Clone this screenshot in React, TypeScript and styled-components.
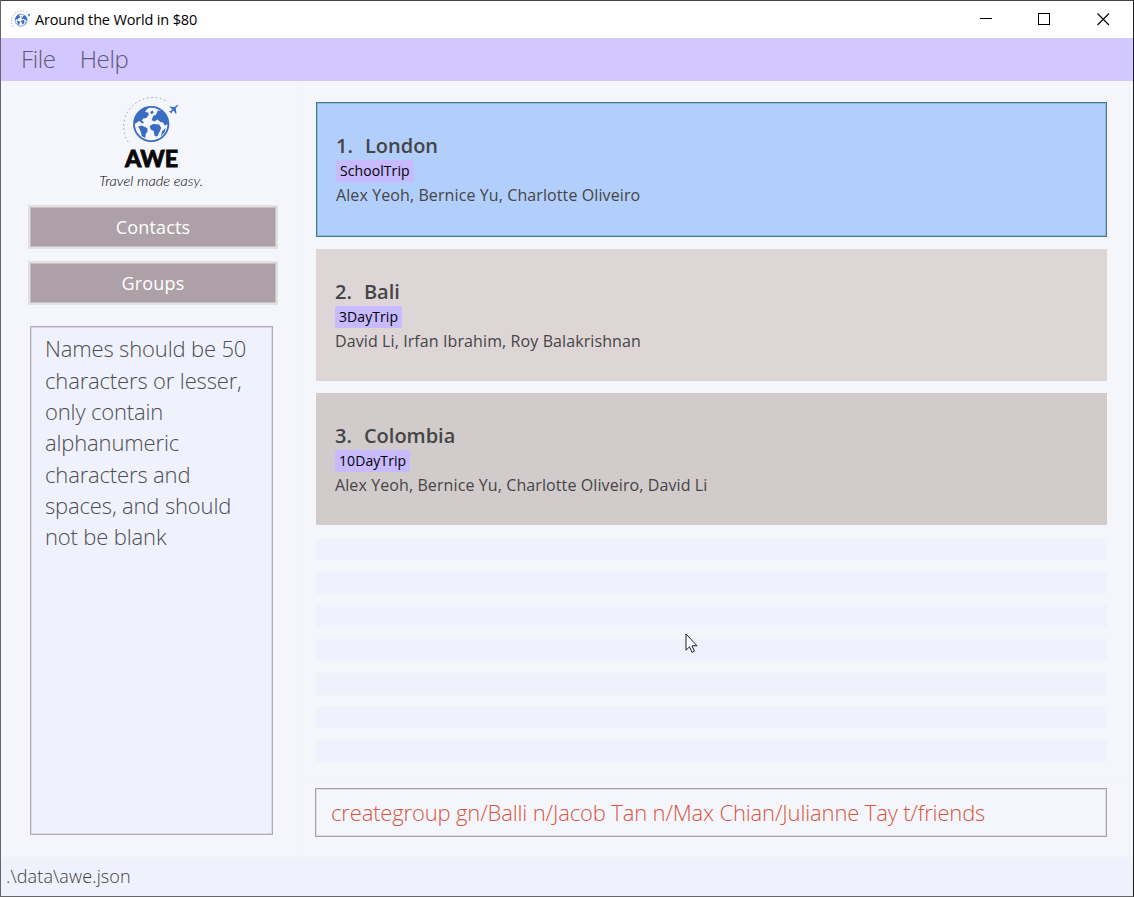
import React from "react";
import styled, { createGlobalStyle } from "styled-components";

const Global = createGlobalStyle`
  * { box-sizing: border-box; }
  body { margin: 0; font-family: "Open Sans", sans-serif; }
`;

const Window = styled.div`
  width: 1134px;
  height: 897px;
  display: flex;
  flex-direction: column;
  border: 1px solid #666;
  border-top-color: #444;
  border-right-color: #1c1c1c;
  background: #f4f6fc;
  position: relative;
  overflow: hidden;
`;
const TitleBar = styled.header`
  height: 37px;
  flex: none;
  display: flex;
  align-items: center;
  padding-left: 10px;
  background: #fff;
`;
const Title = styled.span`
  margin-left: 4px;
  flex: 1;
  font-size: 14.5px;
  letter-spacing: -0.16px;
  color: #000;
`;
const Controls = styled.div`
  display: flex;
  gap: 46px;
  margin-right: 23px;
`;
const MenuBar = styled.nav`
  height: 43px;
  flex: none;
  display: flex;
  align-items: center;
  gap: 24px;
  padding-left: 20px;
  background: #d2c7ff;
  font-size: 24px;
  letter-spacing: -0.35px;
  font-weight: 300;
  color: #5c5770;
`;
const MenuItem = styled.span`
  line-height: 41px;
  padding-bottom: 2px;
`;
const Body = styled.main`
  height: 776px;
  flex: none;
  display: flex;
`;
const Sidebar = styled.aside`
  width: 301px;
  border-right: 2px solid #f2f4fa;
  flex: none;
  display: flex;
  flex-direction: column;
  padding-left: 27px;
`;
const LogoBox = styled.div`
  height: 124px;
  flex: none;
`;
const SideButton = styled.button`
  width: 250px;
  height: 44px;
  flex: none;
  margin-bottom: 12px;
  padding: 0;
  border: 2px solid #e1e1e3;
  background: #ada0a6;
  box-shadow: inset 0 0 0 1px #c6bec1;
  font-family: inherit;
  font-size: 18px;
  letter-spacing: 0.18px;
  line-height: 38px;
  color: #fff;
`;
const Message = styled.section`
  width: 243px;
  height: 509px;
  flex: none;
  margin: 9px 0 0 2px;
  padding: 6.4px 13px 0 14px;
  border: 1px solid #b5aab0;
  box-shadow: inset 0 0 0 1px #dcd9e2;
  background: #eff2fc;
  font-size: 22px;
  letter-spacing: -0.15px;
  line-height: 31.3px;
  font-weight: 300;
  color: #4c4c50;
  white-space: pre;
`;
const Content = styled.div`
  flex: 1;
  display: flex;
  flex-direction: column;
`;
const ListArea = styled.section`
  height: 699px;
  border-bottom: 2px solid #f2f5fa;
  padding: 21px 26px 0 14px;
`;
const Card = styled.article<{ $bg: string; $selected?: boolean }>`
  height: ${(p) => (p.$selected ? 135 : 132)}px;
  margin-bottom: 12px;
  padding: 29px 19px;
  display: flex;
  flex-direction: column;
  align-items: flex-start;
  background: ${(p) => p.$bg};
  border: ${(p) => (p.$selected ? "1px solid #3e7b91" : "none")};
  box-shadow: ${(p) => (p.$selected ? "inset 0 0 0 1px #8db9dc" : "none")};
  color: #454545;
`;
const CardTitle = styled.h2`
  margin: 0;
  display: flex;
  gap: 12px;
  font-size: 20px;
  line-height: 28px;
  font-weight: 600;
`;
const Tag = styled.span`
  height: 23px;
  padding: 0 4px;
  border-radius: 2px;
  background: #c7baff;
  color: #000;
  font-size: 14px;
  letter-spacing: 0.08px;
  font-weight: 500;
  line-height: 22px;
`;
const Members = styled.p`
  margin: 0;
  font-size: 16px;
  letter-spacing: 0.1px;
  line-height: 26px;
`;
const Strips = styled.div`
  display: flex;
  flex-direction: column;
  gap: 11.7px;
  padding-top: 1px;
`;
const Strip = styled.div`
  height: 22px;
  background: #eff2fc;
`;
const Command = styled.div`
  width: 792px;
  height: 49px;
  margin: 8px 0 0 13px;
  padding-left: 15px;
  border: 1px solid #ada0a6;
  box-shadow: inset 0 0 0 1px #dfdce3;
  font-size: 22px;
  letter-spacing: -0.15px;
  line-height: 46px;
  font-weight: 300;
  color: #d5573f;
  white-space: nowrap;
`;
const StatusBar = styled.footer`
  flex: 1;
  padding-left: 5px;
  background: #eff2fc;
  font-size: 18px;
  letter-spacing: 0.14px;
  line-height: 38px;
  font-weight: 300;
  color: #3c3c40;
`;
const Pointer = styled.svg`
  position: absolute;
  left: 684px;
  top: 632px;
`;

const Globe = () => (
  <g>
    <circle cx="30" cy="30" r="17.2" fill="none" stroke="#3b6cc3" strokeWidth="1.8" />
    <path
      fill="#3b6cc3"
      d="M13.5 25 L17 18 L23 13.5 L28 13.5 L25 16 L24 18 L27 18.5 L27.5 21 L25 24 L22 24.5 L20.5 26.5 L23 28.5 L21 29.5 L18 27 L13.5 30Z
      M17 32.5 L20.5 31.5 L26 34 L26.5 37 L24.5 40 L24 44 L20.5 42 L19.5 37.5Z
      M29 18 L31.5 16.5 L32.5 19 L30 20Z
      M30.5 26 L32 22 L35 20.5 L36.5 16.5 L41 17 L45.5 22.5 L47 30 L43.5 31.5 L42 28.5 L39 28 L36.5 25.5 L33 27.5Z
      M28.5 32 L32 30 L38 30.5 L40 34 L38.5 37.5 L36 42.5 L33.5 42 L32.5 37 L29.5 35.5Z
      M41 37 L44.5 34 L43.5 38 L39.5 42.5Z"
    />
  </g>
);

const Plane = () => (
  <path
    fill="#3b6cc3"
    d="M57 11.5 L55.3 13.3 L54.5 14.5 L55.3 19.6 L54.3 19.6 L52.4 16.4 L50.7 18 L50.4 20 L49.4 18.4 L47.6 17.3 L49.6 17 L51.2 15.2 L47.8 12.6 L48.8 12.4 L53.2 13.2 L56 10.8Z"
  />
);

const Logo = () => (
  <svg width="250" height="124" viewBox="0 0 250 124">
    <g transform="translate(93.2 13)">
      <path d="M7 48 A29 29 0 0 1 47 8" fill="none" stroke="#5f87cf" strokeWidth="0.8" strokeDasharray="1.5 2.8" />
      <Globe />
      <Plane />
    </g>
    <text x="97" y="86" textLength="53" lengthAdjust="spacingAndGlyphs" fontFamily="Lato" fontWeight="900" fontSize="23.5" fill="#080808" stroke="#080808" strokeWidth="0.8">
      AWE
    </text>
    <text x="71" y="104.5" textLength="104" lengthAdjust="spacingAndGlyphs" fontFamily="Lato" fontStyle="italic" fontWeight="300" fontSize="14.5" fill="#000">
      Travel made easy.
    </text>
  </svg>
);

const trips = [
  { n: 1, name: "London", tag: "SchoolTrip", who: "Alex Yeoh, Bernice Yu, Charlotte Oliveiro", bg: "#b2cffc" },
  { n: 2, name: "Bali", tag: "3DayTrip", who: "David Li, Irfan Ibrahim, Roy Balakrishnan", bg: "#ded5d6" },
  { n: 3, name: "Colombia", tag: "10DayTrip", who: "Alex Yeoh, Bernice Yu, Charlotte Oliveiro, David Li", bg: "#d1cbcb" },
];

export default function App() {
  return (
    <Window>
      <Global />
      <TitleBar>
        <svg width="20" height="20" viewBox="1 1 57 57">
          <path d="M7 48 A29 29 0 0 1 47 8" fill="none" stroke="#bbb" strokeWidth="3" strokeDasharray="4 4" />
          <Globe />
          <Plane />
        </svg>
        <Title>Around the World in $80</Title>
        <Controls>
          <svg width="13" height="13"><path d="M1 5.5H13" stroke="#000" /></svg>
          <svg width="13" height="13"><rect x=".5" y=".5" width="11" height="11" fill="none" stroke="#000" /></svg>
          <svg width="13" height="13"><path d="M.5 .5L12 12M12 .5L.5 12" stroke="#000" strokeWidth="1.1" /></svg>
        </Controls>
      </TitleBar>
      <MenuBar>
        <MenuItem>File</MenuItem>
        <MenuItem>Help</MenuItem>
      </MenuBar>
      <Body>
        <Sidebar>
          <LogoBox><Logo /></LogoBox>
          <SideButton>Contacts</SideButton>
          <SideButton>Groups</SideButton>
          <Message>{"Names should be 50\ncharacters or lesser,\nonly contain\nalphanumeric\ncharacters and\nspaces, and should\nnot be blank"}</Message>
        </Sidebar>
        <Content>
          <ListArea>
            {trips.map((t) => (
              <Card key={t.n} $bg={t.bg} $selected={t.n === 1}>
                <CardTitle><span>{t.n}.</span><span>{t.name}</span></CardTitle>
                <Tag>{t.tag}</Tag>
                <Members>{t.who}</Members>
              </Card>
            ))}
            <Strips>
              {Array.from({ length: 7 }, (_, i) => <Strip key={i} />)}
            </Strips>
          </ListArea>
          <Command>creategroup gn/Balli n/Jacob Tan n/Max Chian/Julianne Tay t/friends</Command>
        </Content>
      </Body>
      <StatusBar>.\data\awe.json</StatusBar>
      <Pointer width="13" height="21" viewBox="0 0 13 21">
        <path d="M1 1V17.2L4.5 13.8L7 19.3L9.4 18.2L7 12.8H12Z" fill="#fff" stroke="#1e1e2c" />
      </Pointer>
    </Window>
  );
}
